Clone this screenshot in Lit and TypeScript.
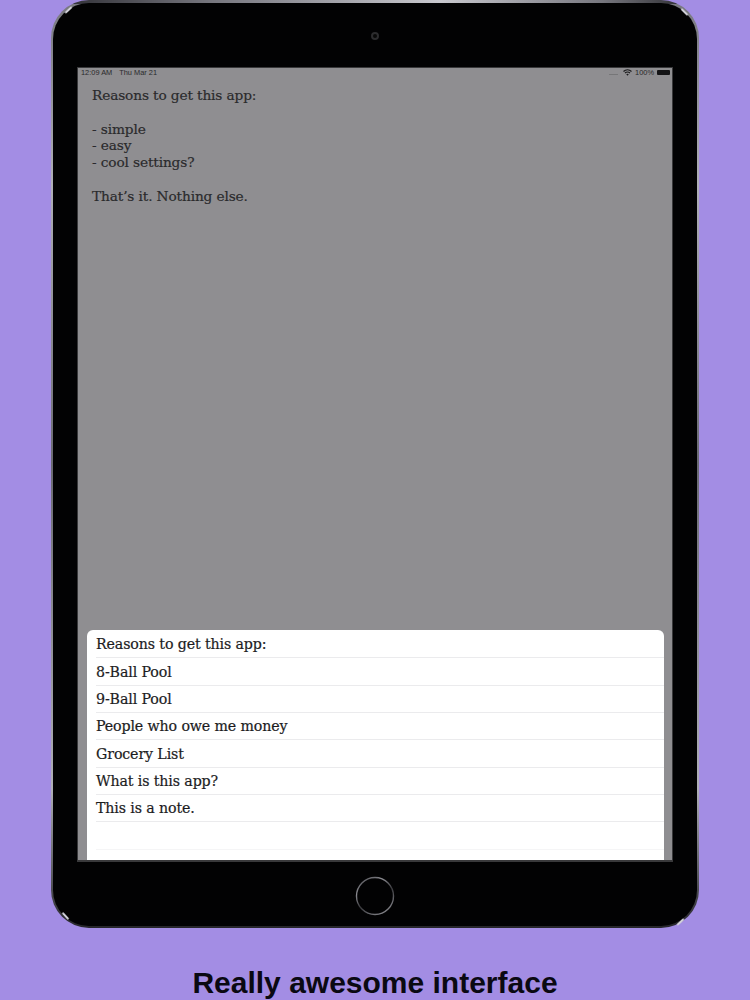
import { LitElement, html, css } from "lit";
import { customElement } from "lit/decorators.js";

const rows = [
  "Reasons to get this app:",
  "8-Ball Pool",
  "9-Ball Pool",
  "People who owe me money",
  "Grocery List",
  "What is this app?",
  "This is a note.",
  "",
];

@customElement("app-root")
export class AppRoot extends LitElement {
  static styles = css`
    :host { display: block; width: 750px; height: 1000px; overflow: hidden; }
    .page {
      height: 1000px; background: #a38de4; display: flex; flex-direction: column;
      align-items: center; font-family: "DejaVu Serif", serif;
    }
    .edge {
      position: relative; width: 648px; height: 928px; box-sizing: border-box; padding: 3px 2px 2px 2px;
      border-radius: 38px; flex: none;
      background:
        linear-gradient(90deg, #2a2a30 0, #77777f 25%, #c8c8ce 60%, #77777f 85%, #222226 100%) top / 100% 4px no-repeat,
        linear-gradient(180deg, #77777e 0, #b0b0b8 20%, #6a6a72 50%, #b0b0b8 85%, #26262a 100%);
    }
    .bezel {
      height: 100%; box-sizing: border-box; background: #020203; border-radius: 36px;
      display: flex; flex-direction: column; align-items: center;
    }
    .top { height: 64px; width: 100%; display: flex; align-items: center; justify-content: center; flex: none; padding-top: 2px; box-sizing: border-box; }
    .camera { width: 8px; height: 8px; box-sizing: border-box; border-radius: 50%; border: 2px solid #2c2c2e; background: #080808; margin-right: 1px; filter: blur(0.4px); }
    .screen {
      width: 596px; height: 795px; flex: none; box-sizing: border-box;
      background: #8f8e91; border: 1px solid #39393b; border-bottom-width: 2px;
      display: flex; flex-direction: column; overflow: hidden;
    }
    .status {
      height: 9px; flex: none; display: flex; align-items: center; justify-content: space-between;
      padding: 0 2px 0 3px; font: 7.4px "Liberation Sans", sans-serif; color: #2a2a2c;
    }
    .status .left { display: flex; gap: 7px; }
    .status .right { display: flex; align-items: center; gap: 3px; }
    .dots { width: 9px; height: 1px; background: #767678; margin: 3px 2px 0 0; }
    .batt { width: 13px; height: 5px; background: #141416; border-radius: 1px; }
    .note {
      margin: 10px 0 0 14px; font-size: 13.7px; line-height: 16.75px; color: #2a2a2c;
      white-space: pre; letter-spacing: -0.12px; flex: 1; -webkit-text-stroke: 0.2px #2a2a2c;
    }
    .list {
      margin: 0 8px 0 9px; background: #fff; border-radius: 6px 6px 0 0; height: 230px; flex: none;
      overflow: hidden; padding: 1px 0 0 9px; box-sizing: border-box;
    }
    .row {
      height: 27.35px; box-sizing: border-box; border-bottom: 1px solid #ebebed;
      display: flex; align-items: center; font-size: 14.2px; letter-spacing: -0.12px; color: #1c1c1e;
      -webkit-text-stroke: 0.2px #1c1c1e;
    }
    .row:last-child { border-bottom-color: #f5f5f6; }
    .bottom { flex: 1; width: 100%; display: flex; align-items: center; justify-content: center; padding-top: 4px; box-sizing: border-box; }
    .home { display: block; }
    .glint { position: absolute; border-radius: 2px; background: #d0d0d8; filter: blur(0.7px); height: 2px; width: 9px; }
    .g1 { left: 13px; top: 9px; transform: rotate(-42deg); }
    .g2 { right: 10px; top: 11px; transform: rotate(45deg); }
    .g3 { left: 10px; bottom: 11px; transform: rotate(48deg); }
    .g4 { right: 14px; bottom: 5px; transform: rotate(-42deg); }
    .caption {
      margin-top: 37px; font: bold 30px/36px "Liberation Sans", sans-serif; color: #0a0912; white-space: nowrap;
    }
  `;

  render() {
    return html`
      <div class="page">
        <div class="edge">
          <div class="bezel">
            <div class="top"><div class="camera"></div></div>
            <div class="screen">
              <div class="status">
                <div class="left"><span>12:09 AM</span><span>Thu Mar 21</span></div>
                <div class="right">
                  <div class="dots"></div>
                  <svg width="9" height="7" viewBox="0 0 18 14">
                    <path d="M1 5a12 12 0 0 1 16 0M4 8a8 8 0 0 1 10 0" fill="none" stroke="#1a1a1c" stroke-width="2.4"/>
                    <path d="M6.5 10.5a4 4 0 0 1 5 0L9 13.5z" fill="#1a1a1c"/>
                  </svg>
                  <span>100%</span>
                  <div class="batt"></div>
                </div>
              </div>
              <div class="note">Reasons to get this app:

- simple
- easy
- cool settings?

That’s it. Nothing else.</div>
              <div class="list">
                ${rows.map((r) => html`<div class="row">${r}</div>`)}
              </div>
            </div>
            <div class="bottom">
              <svg class="home" width="40" height="40" viewBox="0 0 40 40">
                <defs>
                  <linearGradient id="ring" x1="0.2" y1="0" x2="0.8" y2="1">
                    <stop offset="0" stop-color="#55555a"/>
                    <stop offset="0.25" stop-color="#8a8a90"/>
                    <stop offset="0.55" stop-color="#3a3a3e"/>
                    <stop offset="1" stop-color="#8a8a90"/>
                  </linearGradient>
                </defs>
                <circle cx="20" cy="20" r="18.5" fill="none" stroke="url(#ring)" stroke-width="1.4"/>
              </svg>
            </div>
          </div>
          <div class="glint g1"></div>
          <div class="glint g2"></div>
          <div class="glint g3"></div>
          <div class="glint g4"></div>
        </div>
        <div class="caption">Really awesome interface</div>
      </div>
    `;
  }
}
